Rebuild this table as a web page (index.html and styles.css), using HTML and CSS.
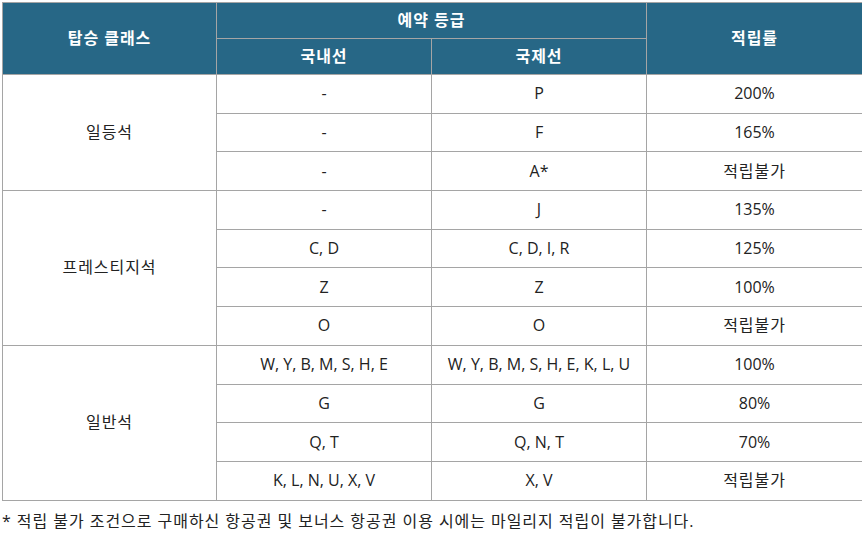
FILE: index.html
```html
<!DOCTYPE html>
<html lang="ko">
<head>
<meta charset="utf-8">
<link rel="stylesheet" href="styles.css">
</head>
<body>
<div class="wrap">
<table class="mileage">
  <colgroup>
    <col class="c1"><col class="c2"><col class="c3"><col class="c4">
  </colgroup>
  <thead>
    <tr>
      <th rowspan="2" class="ko">탑승 클래스</th>
      <th colspan="2" class="ko">예약 등급</th>
      <th rowspan="2" class="ko">적립률</th>
    </tr>
    <tr>
      <th class="ko">국내선</th>
      <th class="ko">국제선</th>
    </tr>
  </thead>
  <tbody>
    <tr><td rowspan="3" class="ko">일등석</td><td>-</td><td>P</td><td>200%</td></tr>
    <tr><td>-</td><td>F</td><td>165%</td></tr>
    <tr><td>-</td><td>A*</td><td class="ko">적립불가</td></tr>
    <tr><td rowspan="4" class="ko">프레스티지석</td><td>-</td><td>J</td><td>135%</td></tr>
    <tr><td>C, D</td><td>C, D, I, R</td><td>125%</td></tr>
    <tr><td>Z</td><td>Z</td><td>100%</td></tr>
    <tr><td>O</td><td>O</td><td class="ko">적립불가</td></tr>
    <tr><td rowspan="4" class="ko">일반석</td><td>W, Y, B, M, S, H, E</td><td>W, Y, B, M, S, H, E, K, L, U</td><td>100%</td></tr>
    <tr><td>G</td><td>G</td><td>80%</td></tr>
    <tr><td>Q, T</td><td>Q, N, T</td><td>70%</td></tr>
    <tr><td>K, L, N, U, X, V</td><td>X, V</td><td class="ko">적립불가</td></tr>
  </tbody>
</table>
<p class="note ko">* 적립 불가 조건으로 구매하신 항공권 및 보너스 항공권 이용 시에는 마일리지 적립이 불가합니다.</p>
</div>
</body>
</html>
```

FILE: styles.css
```css
html, body {
  margin: 0;
  padding: 0;
  background: #fff;
}
body {
  font-family: "Open Sans", "Noto Sans CJK KR", sans-serif;
  font-size: 16px;
  color: #222;
}
.wrap {
  padding: 2px 0 0 2px;
}
.mileage {
  width: 860px;
  border-collapse: collapse;
  table-layout: fixed;
}
.c1 { width: 214px; }
.c2 { width: 215px; }
.c3 { width: 215px; }
.c4 { width: 216px; }
.mileage th,
.mileage td {
  border: 1px solid #a5a5a5;
  text-align: center;
  vertical-align: middle;
  padding: 0;
}
.mileage th {
  background: #276786;
  color: #fff;
  font-weight: bold;
  height: 35px;
  line-height: 21px;
}
.mileage td {
  height: 37.7px;
  line-height: 21px;
}
.ko {
  letter-spacing: 0.95px;
}
.note {
  margin: 10px 0 0 0;
  line-height: 21px;
}
```
